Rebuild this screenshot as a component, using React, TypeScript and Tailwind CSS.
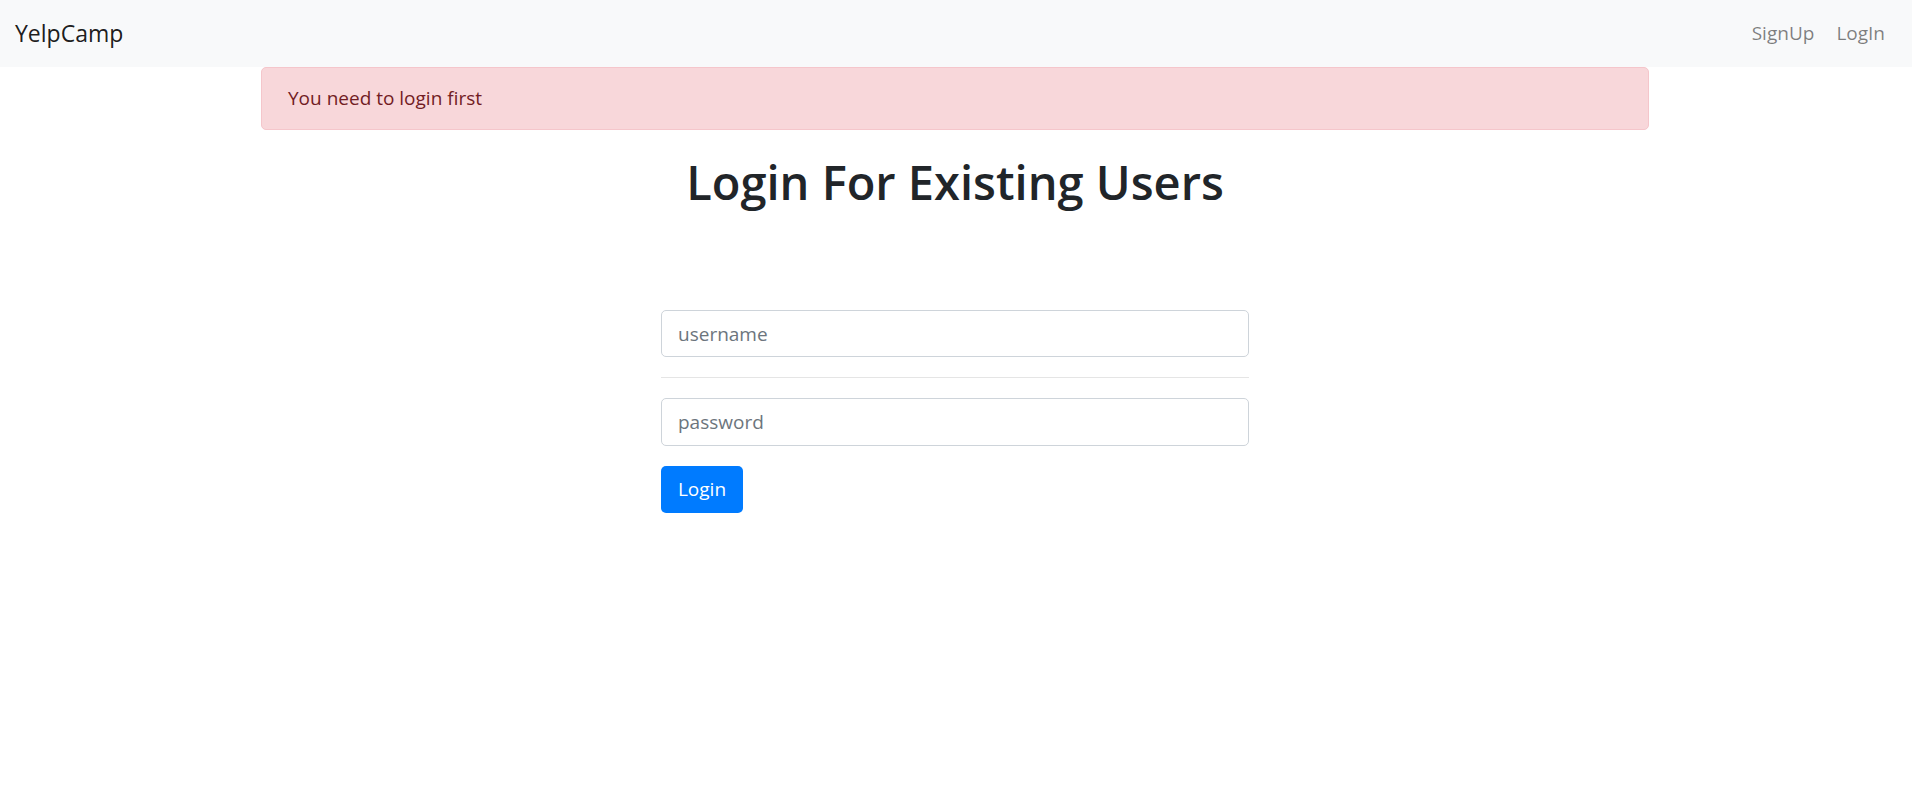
import React from 'react';

export default function App() {
  return (
    <div className="min-h-screen bg-white font-['Open_Sans',sans-serif] text-[#212529]">
      {/* Navbar */}
      <nav className="h-[67px] bg-[#f8f9fa] flex items-center justify-between pl-[15px] pr-[27px]">
        <a href="#" className="text-[23px] leading-none text-black/90">YelpCamp</a>
        <div className="flex items-center gap-[22px] text-[19px] leading-none text-black/50">
          <a href="#">SignUp</a>
          <a href="#">LogIn</a>
        </div>
      </nav>

      <div className="w-[1388px] mx-auto -translate-x-[1px]">
        {/* Alert */}
        <div className="h-[63px] flex items-center px-[26px] bg-[#f8d7da] border border-[#f5c6cb] rounded-[5px] text-[#721c24] text-[19px]">
          You need to login first
        </div>

        <h1 className="mt-[22px] text-center text-[47px] leading-[60px] font-semibold">Login For Existing Users</h1>

        {/* Form */}
        <form className="w-[588px] mx-auto mt-[98px]" onSubmit={(e) => e.preventDefault()}>
          <input
            type="text"
            placeholder="username"
            className="block w-full h-[47px] px-[16px] text-[19px] bg-white border border-[#ced4da] rounded-[5px] placeholder:text-[#6c757d] focus:outline-none"
          />
          <hr className="my-[20px] border-0 border-t border-black/10" />
          <input
            type="password"
            placeholder="password"
            className="block w-full h-[48px] px-[16px] text-[19px] bg-white border border-[#ced4da] rounded-[5px] placeholder:text-[#6c757d] focus:outline-none"
          />
          <button className="mt-[20px] w-[82px] h-[47px] bg-[#007bff] text-white text-[19px] rounded-[5px]">
            Login
          </button>
        </form>
      </div>
    </div>
  );
}
